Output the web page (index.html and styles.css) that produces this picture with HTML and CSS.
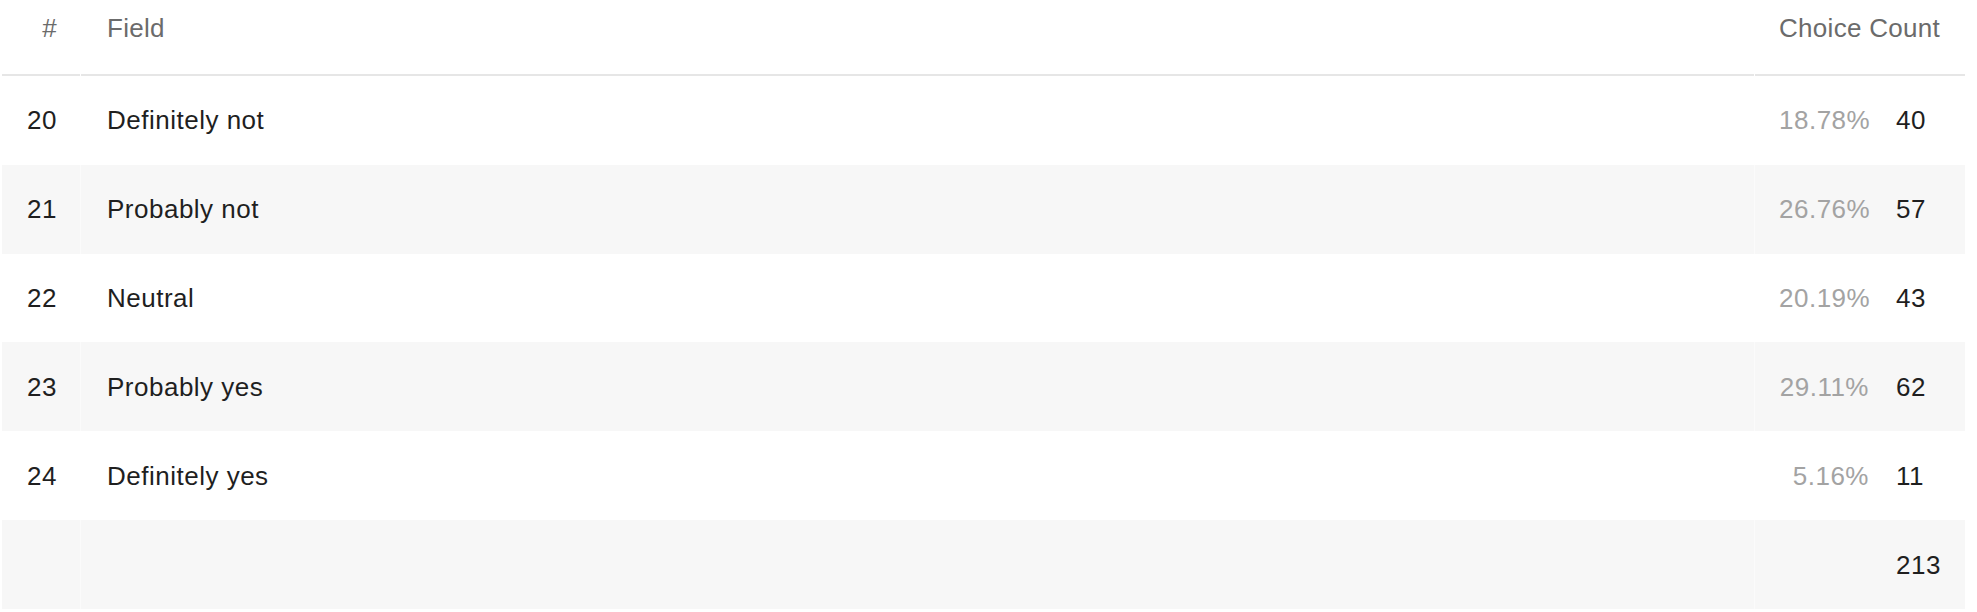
FILE: index.html
```html
<!DOCTYPE html>
<html lang="en">
<head>
<meta charset="utf-8">
<title>Choice Count</title>
<link rel="stylesheet" href="styles.css">
</head>
<body>
<div class="table">
  <div class="row head">
    <div class="cell num">#</div>
    <div class="cell field">Field</div>
    <div class="cell count">Choice Count</div>
  </div>
  <div class="row">
    <div class="cell num">20</div>
    <div class="cell field">Definitely not</div>
    <div class="cell count"><span class="pct">18.78%</span><span class="n">40</span></div>
  </div>
  <div class="row alt">
    <div class="cell num">21</div>
    <div class="cell field">Probably not</div>
    <div class="cell count"><span class="pct">26.76%</span><span class="n">57</span></div>
  </div>
  <div class="row">
    <div class="cell num">22</div>
    <div class="cell field">Neutral</div>
    <div class="cell count"><span class="pct">20.19%</span><span class="n">43</span></div>
  </div>
  <div class="row alt">
    <div class="cell num">23</div>
    <div class="cell field">Probably yes</div>
    <div class="cell count"><span class="pct">29.11%</span><span class="n">62</span></div>
  </div>
  <div class="row">
    <div class="cell num">24</div>
    <div class="cell field">Definitely yes</div>
    <div class="cell count"><span class="pct">5.16%</span><span class="n">11</span></div>
  </div>
  <div class="row alt total">
    <div class="cell num"></div>
    <div class="cell field"></div>
    <div class="cell count"><span class="pct"></span><span class="n">213</span></div>
  </div>
</div>
</body>
</html>
```

FILE: styles.css
```css
html, body {
  margin: 0;
  padding: 0;
  background: #ffffff;
}

body {
  font-family: "Liberation Sans", Arial, sans-serif;
  font-size: 26px;
  line-height: 30px;
  letter-spacing: 0.5px;
  color: #1f1f1f;
  padding: 0 12px 0 2px;
}

.table {
  display: flex;
  flex-direction: column;
}

.row {
  display: grid;
  grid-template-columns: 78px 1fr 210px;
  column-gap: 1px;
  height: 88.83px;
}

.row .cell {
  display: flex;
  align-items: center;
  padding-top: 0;
}

.row.alt {
  background: #fbfbfb;
}

.row.alt .cell {
  background: #f7f7f7;
}

.row.head {
  height: 76px;
}

.row.head .cell {
  align-items: flex-start;
  padding-top: 13px;
  color: #6b6b6b;
  letter-spacing: 0.3px;
  border-bottom: 2px solid #e6e6e6;
}

.num {
  justify-content: flex-end;
  padding-right: 23px;
}

.field {
  padding-left: 26px;
}

.count {
  padding-left: 24px;
}

.pct {
  width: 90px;
  text-align: right;
  color: #a3a3a3;
  margin-right: 27px;
  flex: none;
}

.n {
  color: #1f1f1f;
}
```
